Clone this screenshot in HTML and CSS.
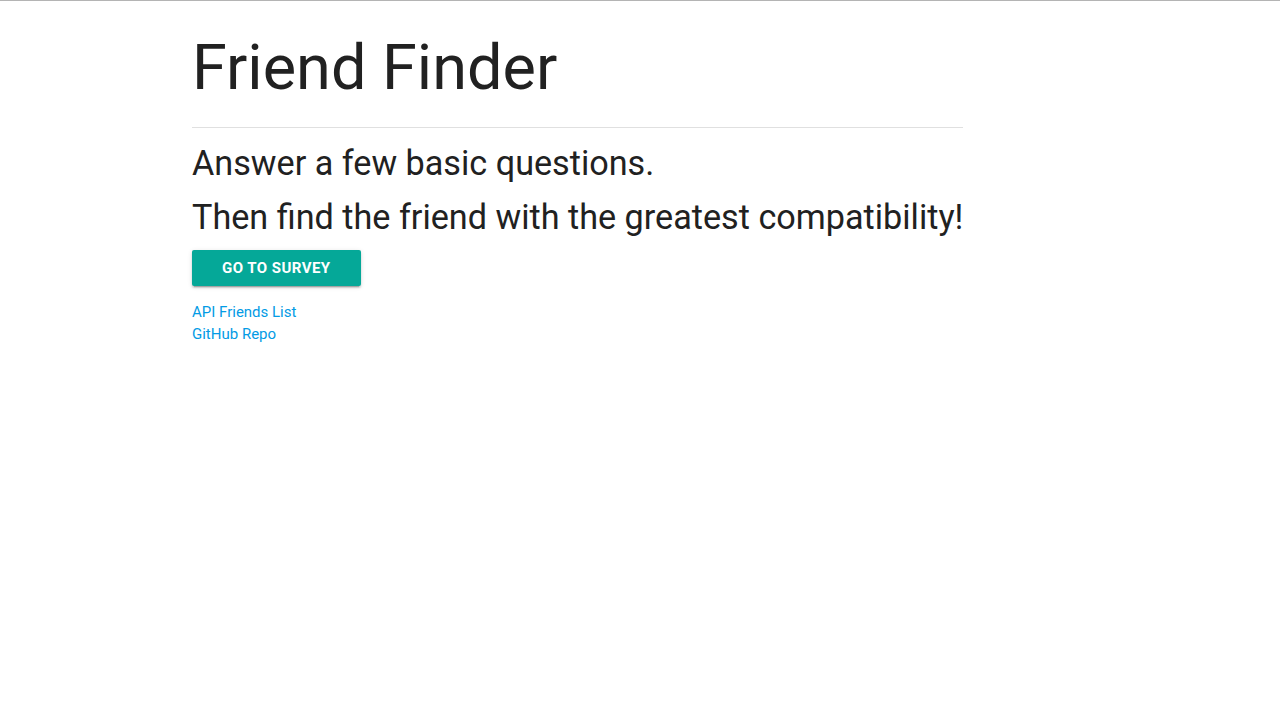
FILE: index.html
```html
<!DOCTYPE html>
<html lang="en">
<head>
<meta charset="utf-8">
<title>Friend Finder</title>
<link rel="stylesheet" href="styles.css">
</head>
<body>
<main class="container">
  <section class="jumbo">
    <h1 class="title">Friend Finder</h1>
    <hr class="rule">
    <p class="lead">Answer a few basic questions.</p>
    <p class="lead">Then find the friend with the greatest compatibility!</p>
    <a class="btn" href="#">Go to Survey</a>
  </section>
  <nav class="links">
    <a href="#">API Friends List</a>
    <a href="#">GitHub Repo</a>
  </nav>
</main>
</body>
</html>
```
FILE: styles.css
```css
html, body {
  margin: 0;
  padding: 0;
  background: #ffffff;
}
body {
  border-top: 1px solid #b4b4b4;
  font-family: Roboto, "Liberation Sans", sans-serif;
  color: rgba(0, 0, 0, 0.87);
  min-height: 703px;
  box-sizing: border-box;
}
.container {
  width: 70%;
  margin: 0 auto;
  display: flex;
  flex-direction: column;
  align-items: flex-start;
}
.jumbo {
  display: flex;
  flex-direction: column;
  align-items: flex-start;
}
.title {
  font-size: 63px;
  font-weight: 400;
  line-height: 1.1;
  margin: 32px 0 0;
  color: #212121;
}
.rule {
  align-self: stretch;
  border: 0;
  border-top: 1px solid #e0e0e0;
  margin: 25px 0 8px;
}
.lead {
  font-size: 34.2px;
  line-height: 54px;
  margin: 0;
  color: #212121;
}
.btn {
  display: inline-flex;
  align-items: center;
  height: 36px;
  padding: 0 30px;
  margin-top: 6px;
  background: #05a898;
  color: #ffffff;
  text-decoration: none;
  text-transform: uppercase;
  font-size: 15px;
  font-weight: 700;
  letter-spacing: 0.45px;
  border-radius: 2px;
  box-shadow: 0 2px 2px 0 rgba(0,0,0,0.14), 0 1px 5px 0 rgba(0,0,0,0.12), 0 3px 1px -2px rgba(0,0,0,0.2);
}
.links {
  margin-top: 15px;
  display: flex;
  flex-direction: column;
}
.links a {
  color: #039be5;
  text-decoration: none;
  font-size: 15px;
  line-height: 22px;
}
```
